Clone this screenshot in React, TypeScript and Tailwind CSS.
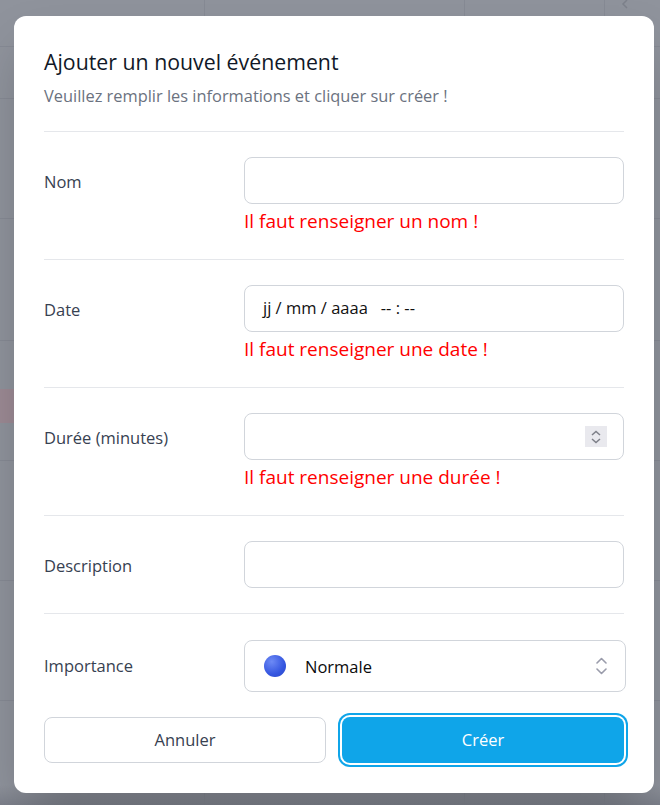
import React from "react";

const font = { fontFamily: '"Open Sans", "Noto Sans", sans-serif' };

function Spinner() {
  return (
    <div className="flex h-[21px] w-[22px] flex-col items-center justify-center gap-[2px] bg-[#e9e9ee]">
      <svg width="10" height="6" viewBox="0 0 10 6" fill="none">
        <path d="M1 5L5 1.5L9 5" stroke="#7d7f88" strokeWidth="1.5" />
      </svg>
      <svg width="10" height="6" viewBox="0 0 10 6" fill="none">
        <path d="M1 1L5 4.5L9 1" stroke="#7d7f88" strokeWidth="1.5" />
      </svg>
    </div>
  );
}

function UpDown() {
  return (
    <div className="flex flex-col items-center gap-[4px]">
      <svg width="11" height="7" viewBox="0 0 11 7" fill="none">
        <path d="M1 6L5.5 1.5L10 6" stroke="#9a9cab" strokeWidth="1.6" strokeLinecap="round" strokeLinejoin="round" />
      </svg>
      <svg width="11" height="7" viewBox="0 0 11 7" fill="none">
        <path d="M1 1L5.5 5.5L10 1" stroke="#9a9cab" strokeWidth="1.6" strokeLinecap="round" strokeLinejoin="round" />
      </svg>
    </div>
  );
}

function Row({
  label,
  children,
  error,
}: {
  label: string;
  children: React.ReactNode;
  error?: string;
}) {
  return (
    <div className="grid grid-cols-[200px_1fr] border-b border-[#e5e7eb] pt-[25px] pb-[24px]">
      <div className="flex h-[47px] items-center pt-[3px] text-[16.5px] text-[#374151]">{label}</div>
      <div>
        {children}
        {error && (
          <div className="mt-[3px] text-[19px] leading-[28px] text-[#ff0000]">{error}</div>
        )}
      </div>
    </div>
  );
}

export default function App() {
  const hLines = [46, 98, 218, 340, 460, 580, 700];
  return (
    <div className="relative h-[805px] w-[660px] overflow-hidden bg-[#8f939c]" style={font}>
      {/* underlying page seen through overlay */}
      {hLines.map((y) => (
        <div key={y} className="absolute left-0 right-0 h-px bg-[#868a94]" style={{ top: y }} />
      ))}
      <div className="absolute left-[204px] top-0 bottom-0 w-px bg-[#868a94]" />
      <div className="absolute left-[464px] top-0 bottom-0 w-px bg-[#868a94]" />
      <div className="absolute left-[604px] top-0 bottom-0 w-px bg-[#868a94]" />
      <div className="absolute left-0 top-[389px] flex h-[34px] w-[40px] items-center justify-end bg-[#9c8a94] text-[15px] text-[#8a6470]">
        ne
      </div>
      <svg className="absolute left-[620px] top-0" width="10" height="10" viewBox="0 0 10 10" fill="none">
        <path d="M7 0L3 4L7 8" stroke="#7d818b" strokeWidth="1.5" />
      </svg>
      <div className="absolute inset-x-0 bottom-0 h-[20px] bg-gradient-to-b from-transparent to-[#7c808a]" />

      <div className="relative ml-[14px] mt-4 h-[777px] w-[640px] rounded-xl bg-white px-[30px] pt-8 shadow-2xl">
        <div className="border-b border-[#e5e7eb] pb-[23px]">
          <div className="text-[21.3px] leading-[28px] text-[#111827]">Ajouter un nouvel événement</div>
          <div className="mt-2 text-[16.4px] leading-[24px] text-[#6b7280]">
            Veuillez remplir les informations et cliquer sur créer !
          </div>
        </div>

        <Row label="Nom" error="Il faut renseigner un nom !">
          <div className="h-[47px] rounded-lg border border-[#d1d5db] bg-white" />
        </Row>
        <Row label="Date" error="Il faut renseigner une date !">
          <div className="flex h-[47px] items-center rounded-lg border border-[#d1d5db] bg-white pl-[18px] text-[16.5px] text-[#111]">
            <span>jj / mm / aaaa</span>
            <span className="ml-[13px]">-- : --</span>
          </div>
        </Row>
        <Row label="Durée (minutes)" error="Il faut renseigner une durée !">
          <div className="flex h-[47px] items-center justify-end rounded-lg border border-[#d1d5db] bg-white pr-[16px]">
            <Spinner />
          </div>
        </Row>
        <div className="grid grid-cols-[200px_1fr] border-b border-[#e5e7eb] pt-[25px] pb-[25px]">
          <div className="flex h-[47px] items-center pt-[3px] text-[16.5px] text-[#374151]">Description</div>
          <div className="h-[47px] rounded-lg border border-[#d1d5db] bg-white" />
        </div>

        <div className="grid grid-cols-[200px_1fr] pt-[26px]">
          <div className="flex h-[52px] items-center pt-[1px] text-[16.5px] text-[#374151]">Importance</div>
          <div className="flex h-[52px] w-[calc(100%+2px)] items-center rounded-lg border border-[#d1d5db] bg-white pl-[19px] pr-[18px]">
            <div className="h-[22px] w-[22px] rounded-full bg-[radial-gradient(circle_at_35%_30%,#6d8af5,#3556e0_60%,#2a47c8)]" />
            <span className="ml-[19px] flex-1 pt-[2px] text-[16.5px] text-[#0b0b0b]">Normale</span>
            <UpDown />
          </div>
        </div>

        <div className="mt-[25px] grid grid-cols-2 gap-4">
          <button className="h-[46px] rounded-lg border border-[#d1d5db] bg-white text-[16.5px] text-[#374151]">
            Annuler
          </button>
          <button className="h-[46px] rounded-lg bg-[#0fa5e9] text-[16.5px] text-white ring-2 ring-[#0fa5e9] ring-offset-2">
            Créer
          </button>
        </div>
      </div>
    </div>
  );
}
